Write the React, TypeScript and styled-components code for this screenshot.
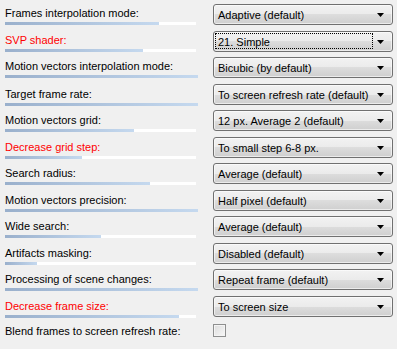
import React from "react";
import styled, { createGlobalStyle } from "styled-components";

const Global = createGlobalStyle`
  html, body { margin: 0; padding: 0; background: #f0f0f0; }
  body { font-family: "Liberation Sans", Arial, sans-serif; font-size: 11px; color: #000; }
`;

const Page = styled.div`
  width: 397px;
  height: 349px;
  box-sizing: border-box;
  padding: 4px 0 0 5px;
  display: flex;
  flex-direction: column;
`;

const Row = styled.div`
  display: grid;
  grid-template-columns: 208px 180px;
  height: 27px;
`;

const Left = styled.div<{ $late?: boolean }>`
  display: flex;
  flex-direction: column;
  padding-top: ${(p) => (p.$late ? 1 : 0)}px;
`;

const Label = styled.div<{ $red?: boolean }>`
  margin-top: 2px;
  height: 14px;
  line-height: 14px;
  white-space: nowrap;
  color: ${(p) => (p.$red ? "#ff0000" : "#000")};
`;

const Track = styled.div`
  margin-top: 2px;
  width: 191px;
  height: 3px;
  background: #fff;
`;

const Fill = styled.div`
  height: 3px;
  background: linear-gradient(to right, #9ab0cc, #c5d9ef);
`;

const Combo = styled.div`
  position: relative;
  box-sizing: border-box;
  width: 180px;
  height: 21px;
  border: 1px solid #707070;
  border-radius: 3px;
  background: linear-gradient(to bottom, #f2f2f2 0%, #ebebeb 50%, #dddddd 50%, #cfcfcf 100%);
  box-shadow: inset 0 0 0 1px rgba(255, 255, 255, 0.6);
  display: flex;
  align-items: flex-end;
  padding: 0 0 2px 3px;
`;

const ComboText = styled.span`
  flex: 1;
  line-height: 13px;
  padding: 0 0 0 1px;
  margin-right: 18px;
  white-space: nowrap;
`;

const Focus = styled.div`
  position: absolute;
  left: 1px;
  top: 1px;
  width: 158px;
  height: 16px;
  box-sizing: border-box;
  border: 1px dotted #000;
`;

const Arrow = styled.svg`
  position: absolute;
  right: 8px;
  top: 8px;
`;

const Check = styled.div`
  box-sizing: border-box;
  width: 13px;
  height: 13px;
  margin-top: 2px;
  border: 1px solid #8e8f8f;
  background: linear-gradient(135deg, #dcdcdc, #f8f8f8);
  box-shadow: inset 0 0 0 1px #f4f4f4;
`;

type Item = { label: string; red?: boolean; value: string; fill: number; focus?: boolean };

const items: Item[] = [
  { label: "Frames interpolation mode:", value: "Adaptive (default)", fill: 154 },
  { label: "SVP shader:", red: true, value: "21. Simple", fill: 138, focus: true },
  { label: "Motion vectors interpolation mode:", value: "Bicubic (by default)", fill: 193 },
  { label: "Target frame rate:", value: "To screen refresh rate (default)", fill: 193 },
  { label: "Motion vectors grid:", value: "12 px. Average 2 (default)", fill: 129 },
  { label: "Decrease grid step:", red: true, value: "To small step 6-8 px.", fill: 77 },
  { label: "Search radius:", value: "Average (default)", fill: 145 },
  { label: "Motion vectors precision:", value: "Half pixel (default)", fill: 193 },
  { label: "Wide search:", value: "Average (default)", fill: 96 },
  { label: "Artifacts masking:", value: "Disabled (default)", fill: 32 },
  { label: "Processing of scene changes:", value: "Repeat frame (default)", fill: 193 },
  { label: "Decrease frame size:", red: true, value: "To screen size", fill: 174 },
];

export default function App() {
  return (
    <>
      <Global />
      <Page>
        {items.map((it, i) => (
          <Row key={it.label}>
            <Left $late={i >= 3}>
              <Label $red={it.red}>{it.label}</Label>
              <Track>
                <Fill style={{ width: it.fill }} />
              </Track>
            </Left>
            <Combo>
              {it.focus && <Focus />}
              <ComboText>{it.value}</ComboText>
              <Arrow width="7" height="4" viewBox="0 0 7 4">
                <path d="M0 0h7L3.5 4z" fill="#000" />
              </Arrow>
            </Combo>
          </Row>
        ))}
        <Row>
          <Left>
            <Label>Blend frames to screen refresh rate:</Label>
          </Left>
          <Check />
        </Row>
      </Page>
    </>
  );
}
